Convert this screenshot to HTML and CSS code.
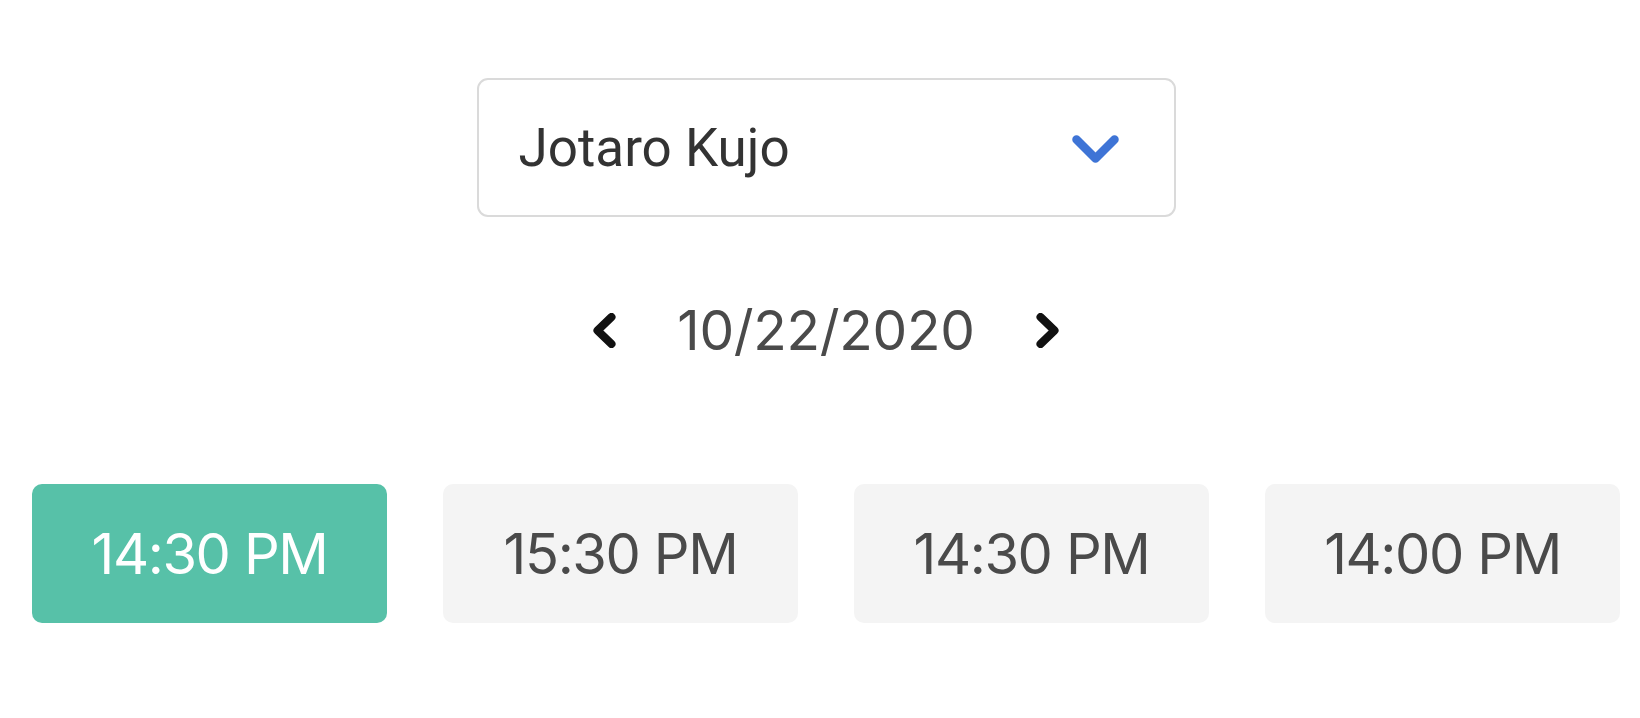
FILE: index.html
```html
<!DOCTYPE html>
<html>
<head>
<meta charset="utf-8">
<link rel="stylesheet" href="styles.css">
</head>
<body>
<div class="page">
  <div class="select">
    <span class="select-text">Jotaro Kujo</span>
    <svg class="select-chevron" width="47" height="29" viewBox="0 0 47 29"><polyline points="4.5,4.5 23.5,23.5 42.5,4.5" fill="none" stroke="#3e74d6" stroke-width="8.5" stroke-linecap="round" stroke-linejoin="round"/></svg>
  </div>
  <div class="date-row">
    <svg class="arrow" width="23" height="35" viewBox="0 0 23 35"><polyline points="18.5,4 4.5,17.5 18.5,31" fill="none" stroke="#111" stroke-width="8" stroke-linecap="round" stroke-linejoin="round"/></svg>
    <span class="date-text">10/22/2020</span>
    <svg class="arrow" width="23" height="35" viewBox="0 0 23 35"><polyline points="4.5,4 18.5,17.5 4.5,31" fill="none" stroke="#111" stroke-width="8" stroke-linecap="round" stroke-linejoin="round"/></svg>
  </div>
  <div class="slots">
    <div class="slot slot-active">14:30 PM</div>
    <div class="slot">15:30 PM</div>
    <div class="slot">14:30 PM</div>
    <div class="slot">14:00 PM</div>
  </div>
</div>
</body>
</html>
```
FILE: styles.css
```css
html, body {
  margin: 0;
  padding: 0;
  background: #ffffff;
}

.page {
  width: 1588px;
  margin-left: 32px;
  padding-top: 78px;
  display: flex;
  flex-direction: column;
  align-items: center;
}

.select {
  width: 699px;
  height: 139px;
  box-sizing: border-box;
  border: 2px solid #dadada;
  border-radius: 11px;
  display: flex;
  align-items: center;
  justify-content: space-between;
  padding: 0 55px 0 40px;
}

.select-text {
  font-family: Roboto, "Liberation Sans", sans-serif;
  font-size: 53px;
  color: #333333;
}

.select-chevron {
  display: block;
  margin-top: 3px;
}

.date-row {
  margin-top: 83px;
  height: 60px;
  display: flex;
  align-items: center;
  gap: 61px;
}

.arrow {
  display: block;
}

.date-text {
  font-family: Inter, "Liberation Sans", sans-serif;
  font-size: 55px;
  letter-spacing: -0.3px;
  color: #4a4a4a;
}

.slots {
  margin-top: 124px;
  width: 100%;
  display: flex;
  gap: 56px;
}

.slot {
  flex: 1;
  height: 139px;
  border-radius: 10px;
  background: #f4f4f4;
  display: flex;
  align-items: center;
  justify-content: center;
  font-family: Inter, "Liberation Sans", sans-serif;
  font-size: 56px;
  letter-spacing: -1.4px;
  color: #4a4a4a;
}

.slot-active {
  background: #57c1a8;
  color: #ffffff;
}
```
